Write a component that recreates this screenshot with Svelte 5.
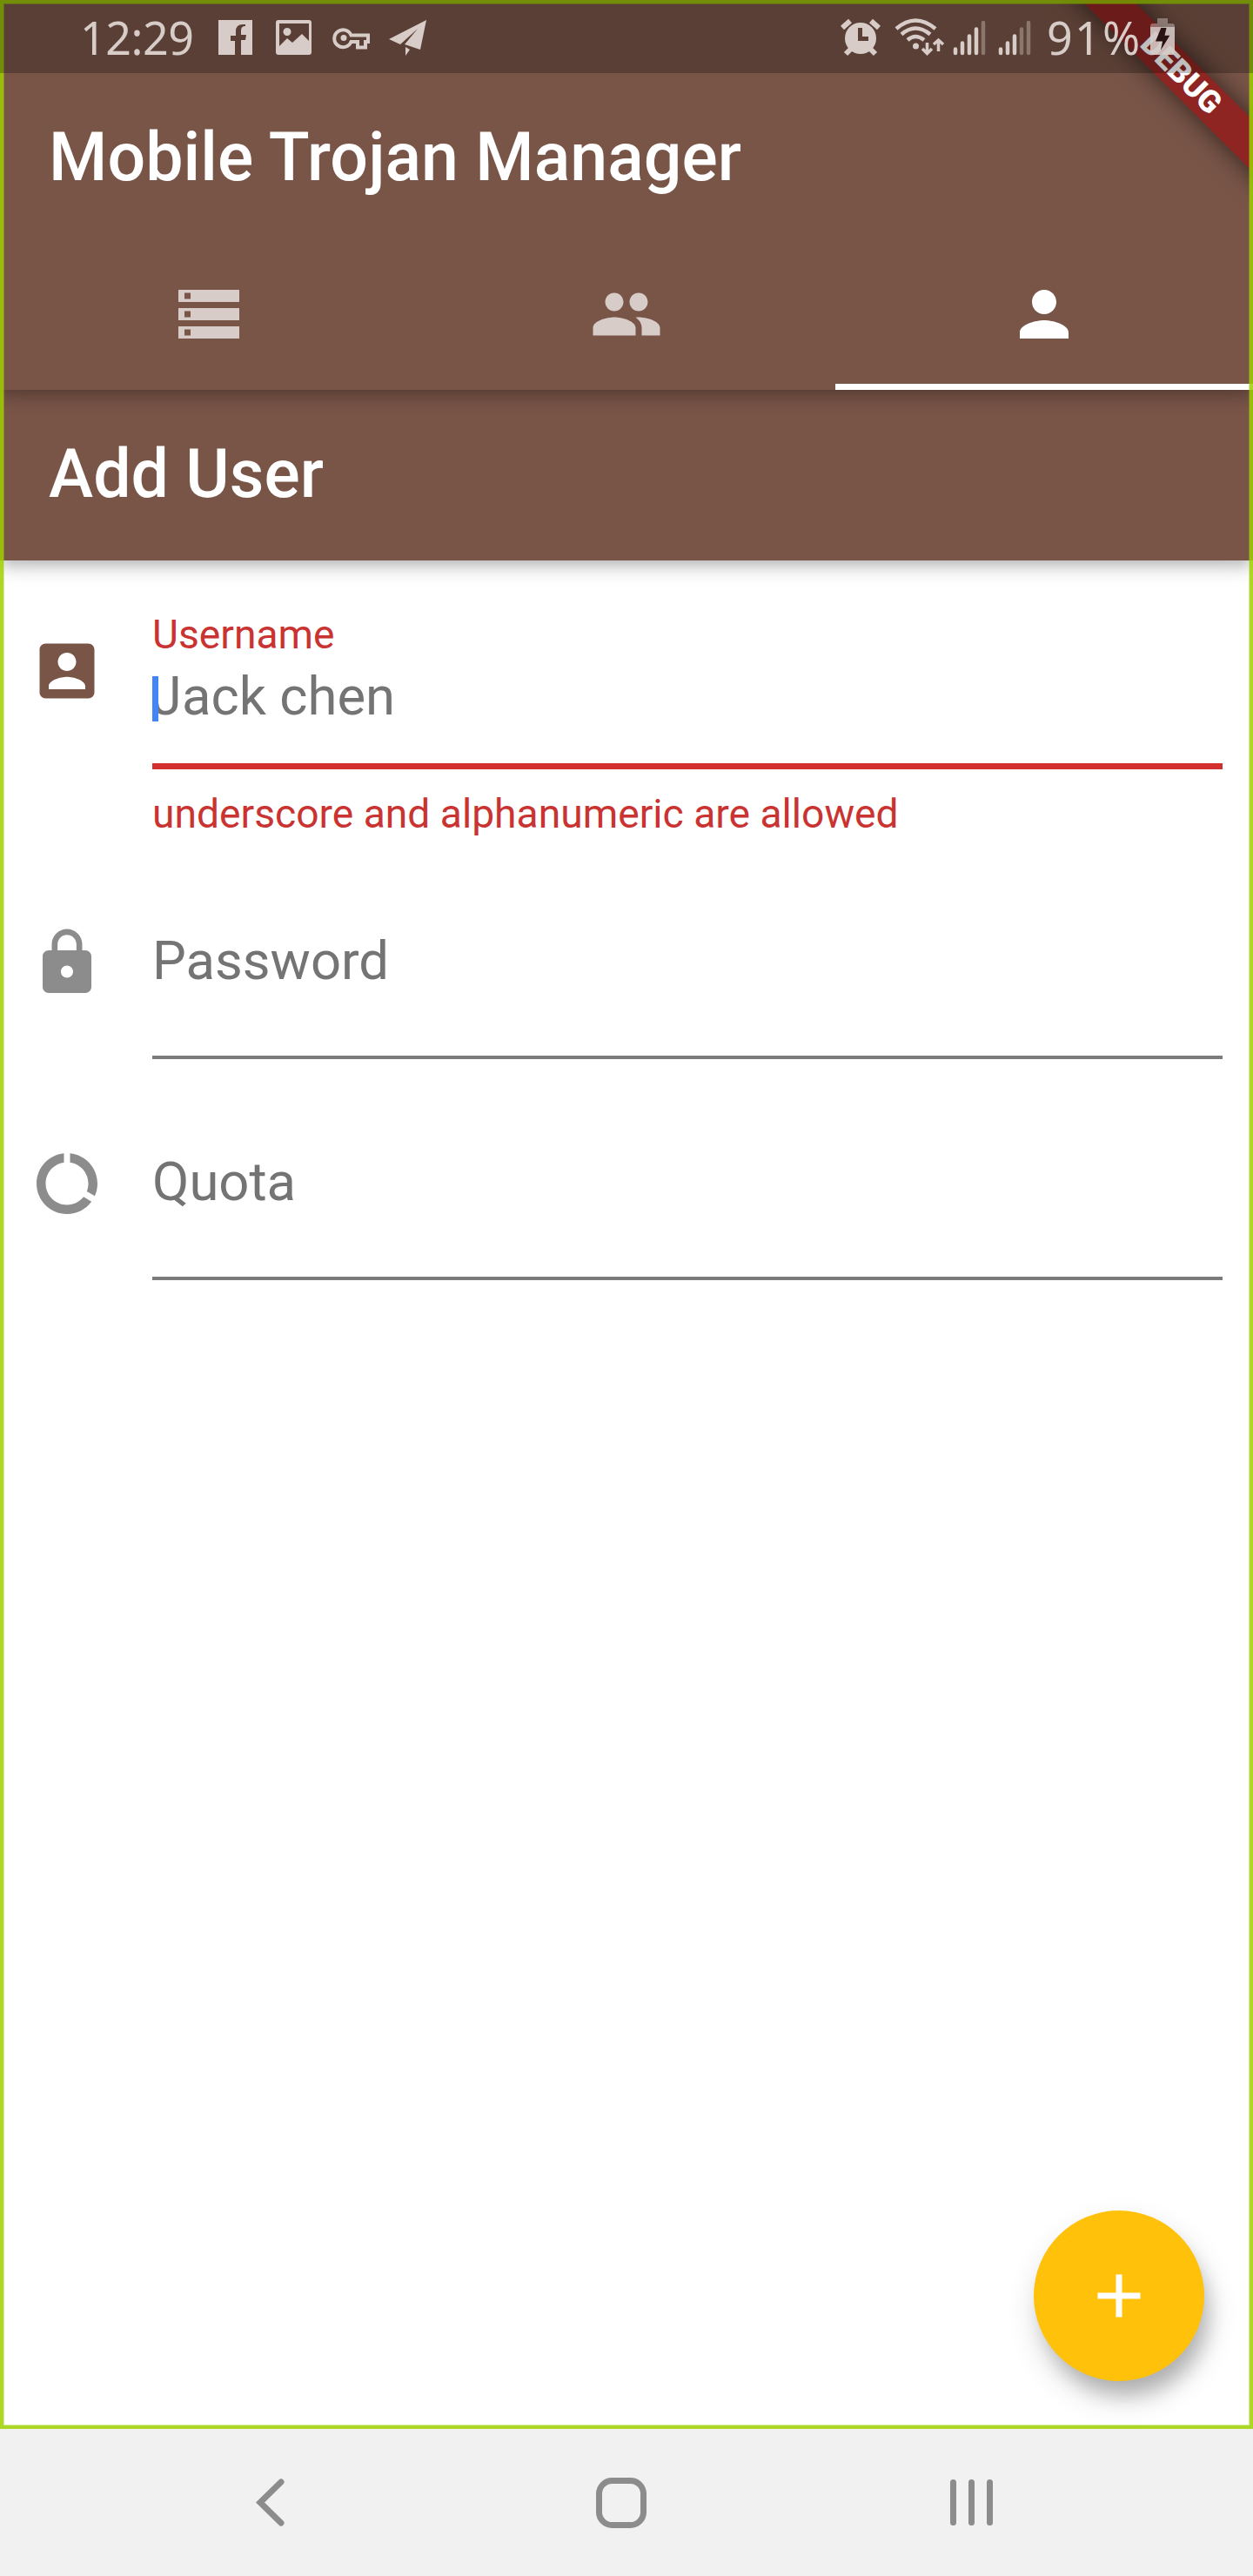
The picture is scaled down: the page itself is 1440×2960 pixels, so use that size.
<script>
  const tabs = [
    { id: 'servers', active: false, d: 'M2 20h20v-4H2v4zm2-3h2v2H4v-2zM2 4v4h20V4H2zm4 3H4V5h2v2zm-4 7h20v-4H2v4zm2-3h2v2H4v-2z' },
    { id: 'users', active: false, d: 'M16 11c1.66 0 2.99-1.34 2.99-3S17.66 5 16 5c-1.66 0-3 1.34-3 3s1.34 3 3 3zm-8 0c1.66 0 2.99-1.34 2.99-3S9.66 5 8 5C6.34 5 5 6.34 5 8s1.34 3 3 3zm0 2c-2.33 0-7 1.17-7 3.5V19h14v-2.5c0-2.33-4.67-3.5-7-3.5zm8 0c-.29 0-.62.02-.97.05 1.16.84 1.97 1.97 1.97 3.45V19h6v-2.5c0-2.33-4.67-3.5-7-3.5z' },
    { id: 'user', active: true, d: 'M12 12c2.21 0 4-1.79 4-4s-1.79-4-4-4-4 1.79-4 4 1.79 4 4 4zm0 2c-2.67 0-8 1.34-8 4v2h16v-2c0-2.66-5.33-4-8-4z' }
  ];
  const accountBox = 'M3 5v14c0 1.1.89 2 2 2h14c1.1 0 2-.9 2-2V5c0-1.1-.9-2-2-2H5c-1.11 0-2 .9-2 2zm12 4c0 1.66-1.34 3-3 3s-3-1.34-3-3 1.34-3 3-3 3 1.34 3 3zm-9 8c0-2 4-3.1 6-3.1s6 1.1 6 3.1v1H6v-1z';
  const lock = 'M18 8h-1V6c0-2.76-2.24-5-5-5S7 3.24 7 6v2H6c-1.1 0-2 .9-2 2v10c0 1.1.9 2 2 2h12c1.1 0 2-.9 2-2V10c0-1.1-.9-2-2-2zm-6 9c-1.1 0-2-.9-2-2s.9-2 2-2 2 .9 2 2-.9 2-2 2zm3.1-9H8.9V6c0-1.71 1.39-3.1 3.1-3.1 1.71 0 3.1 1.39 3.1 3.1v2z';
  const dataUsage = 'M13 2.05v3.03c3.39.49 6 3.39 6 6.92 0 .9-.18 1.75-.48 2.54l2.6 1.53c.56-1.24.88-2.62.88-4.07 0-5.18-3.95-9.45-9-9.95zM12 19c-3.87 0-7-3.13-7-7 0-3.53 2.61-6.43 6-6.92V2.05c-5.06.5-9 4.76-9 9.95 0 5.52 4.47 10 9.99 10 3.31 0 6.24-1.61 8.06-4.09l-2.6-1.53C16.17 17.98 14.21 19 12 19z';
</script>

<div class="phone">
  <div class="app">
    <header class="appbar main">
      <h1>Mobile Trojan Manager</h1>
      <nav class="tabs">
        {#each tabs as tab (tab.id)}
          <div class="tab" class:active={tab.active}>
            <svg class="icon" viewBox="0 0 24 24"><path d={tab.d} /></svg>
          </div>
        {/each}
      </nav>
    </header>
    <header class="appbar sub"><h1>Add User</h1></header>

    <main>
      <div class="row username">
        <svg class="icon" viewBox="0 0 24 24"><path d={accountBox} /></svg>
        <div class="field">
          <div class="label">Username</div>
          <div class="value">Jack chen<i class="caret"></i></div>
          <div class="error">underscore and alphanumeric are allowed</div>
        </div>
      </div>
      <div class="row">
        <svg class="icon" viewBox="0 0 24 24"><path d={lock} /></svg>
        <div class="field plain">Password</div>
      </div>
      <div class="row">
        <svg class="icon" viewBox="0 0 24 24"><path d={dataUsage} /></svg>
        <div class="field plain">Quota</div>
      </div>
    </main>

    <div class="fab">
      <svg class="icon" viewBox="0 0 24 24"><path d="M19 13h-6v6h-2v-6H5v-2h6V5h2v6h6v2z" /></svg>
    </div>
    <div class="banner-clip"><div class="banner">DEBUG</div></div>
    <div class="frame"></div>

    <div class="status">
      <span class="clock">12:29</span>
      <svg class="notices" viewBox="240 0 260 84">
        <path d="M251 23h39v40h-13V46h5l1-6h-6v-5q0-5 5-5V28h-3q-8 0-8 8v5h-6v6h5v16h-19z" />
        <path fill-rule="evenodd" d="M320 23h35q3 0 3 3v34q0 3-3 3h-35q-3 0-3-3V26q0-3 3-3zm1 4v26l9-9 6 5 11-10 8 8V27zm9 5a4.500 4.500 0 1 1-.01 0z" />
        <path class="line" d="M403.500 40.500H423V48H420V54.500H411V48H403.500A10 10 0 1 1 403.500 40.500Z" />
        <circle cx="395" cy="43.500" r="3.500" />
        <path d="M447 45 490 23 483 57 465 51 480 33 460 51zM466 54 471 57 466 64z" />
      </svg>
      <svg class="signals" viewBox="960 0 230 84">
        <circle cx="989" cy="44" r="18" />
        <path class="stroke" d="M968 32 977 24M1001 24 1010 32M980 54 972 62M998 54 1006 62" />
        <path class="ink" d="M986 32h5v10h7v5h-12z" />
        <path class="arc" d="M1030 33Q1052 14 1075 33M1036 39.500Q1052 25.500 1069 39.500M1043 46Q1052 38 1062 46" />
        <circle cx="1052.500" cy="53" r="3.500" />
        <path class="arrow" d="M1065.500 49V60M1060 56 1065.500 61.500 1071 56M1078.500 59V47M1073 51 1078.500 46 1084 51" />
        <path class="bar" d="M1098 56.500V61M1106 49.500V61M1114 41.500V61M1122 33.500V61M1150 56.500V61M1158 49.500V61M1166 41.500V61" />
        <path class="bar dim" d="M1130 26V61M1174 33.500V61M1182 26V61" />
      </svg>
      <span class="percent">91%</span>
      <svg class="battery" viewBox="1320 0 32 84">
        <path class="faint" d="M1330 21h12v6h5q3 0 3 3v1h-28v-1q0-3 3-3h5z" />
        <path class="cell" d="M1322 31h28v29q0 3-3 3h-22q-3 0-3-3z" />
        <path class="bolt" d="M1334.300 32h6.200l-2 8.700h5.800l-10.300 17 2-10.300h-8z" />
      </svg>
    </div>
  </div>

  <footer class="softkeys">
    <svg viewBox="0 0 1440 168">
      <path class="key" d="M323 60 299 83.500 323 107" />
      <rect class="key" x="688.500" y="58.500" width="51" height="51" rx="15" />
      <path class="key" d="M1095.500 60.500V106.500M1116.500 60.500V106.500M1137.500 60.500V106.500" />
    </svg>
  </footer>
</div>

<style>
  :global(body) { margin: 0; }
  .phone {
    width: 1440px;
    height: 2960px;
    display: flex;
    flex-direction: column;
    font-family: Roboto, sans-serif;
    background: #f1f1f1;
    overflow: hidden;
  }
  .app {
    position: relative;
    height: 2791px;
    flex: none;
    overflow: hidden;
    background: #fff;
    display: flex;
    flex-direction: column;
    margin-bottom: 1px;
  }
  .appbar {
    position: relative;
    background: #795548;
    color: #fff;
    flex: none;
    box-shadow: 0 7px 14px -3px rgba(0, 0, 0, .2), 0 14px 18px rgba(0, 0, 0, .08), 0 3px 30px rgba(0, 0, 0, .05);
  }
  .main { padding-top: 84px; z-index: 2; }
  .sub { z-index: 1; }
  h1 {
    margin: 0;
    height: 196px;
    line-height: 194px;
    padding-left: 56px;
    font-size: 77px;
    font-weight: 500;
    letter-spacing: .08px;
    white-space: nowrap;
  }
  .tabs { display: flex; height: 168px; }
  .tab {
    flex: 1;
    box-sizing: border-box;
    display: flex;
    align-items: center;
    justify-content: center;
    color: #d7ccc8;
    border-bottom: 7px solid transparent;
  }
  .tab.active { color: #fff; border-color: #fff; }
  .icon { width: 84px; height: 84px; fill: currentColor; flex: none; display: block; }
  main { padding: 47px 35px 0; }
  .row { display: flex; align-items: center; gap: 56px; color: #8c8c8c; height: 254px; }
  .row > .icon { margin-top: 31px; }
  .row.username { color: #795548; align-items: flex-start; height: 272px; }
  .row.username > .icon { margin-top: 38px; }
  .field { flex: 1; color: #747474; font-size: 61.600px; white-space: nowrap; }
  .label, .error { color: #c93331; font-size: 46.200px; line-height: 54px; }
  .label { padding-top: 11px; }
  .value {
    position: relative;
    height: 116px;
    line-height: 78px;
    padding-top: 5px;
    border-bottom: 7px solid #d32f2f;
  }
  .caret { position: absolute; left: 0; top: 21px; width: 7px; height: 52px; background: #4285f4; }
  .error { padding-top: 24px; }
  .plain { height: 254px; box-sizing: border-box; border-bottom: 4px solid #7b7b7b; line-height: 282px; }
  .fab {
    position: absolute;
    right: 56px;
    bottom: 55px;
    width: 196px;
    height: 196px;
    border-radius: 50%;
    background: #ffc10a;
    color: #fff;
    display: flex;
    align-items: center;
    justify-content: center;
    box-shadow: 8px 20px 22px -4px rgba(0, 0, 0, .2), 4px 18px 36px rgba(0, 0, 0, .16);
  }
  .banner-clip { position: absolute; right: 0; top: 0; width: 300px; height: 300px; overflow: hidden; z-index: 3; }
  .banner {
    position: absolute;
    width: 400px;
    height: 42px;
    left: 17px;
    top: 63.500px;
    transform: rotate(45deg);
    background: #8f2522;
    box-shadow: 0 0 30px rgba(0, 0, 0, .6);
    color: #fff;
    font-size: 35.700px;
    font-weight: 900;
    line-height: 40px;
    text-align: center;
  }
  .frame {
    position: absolute;
    inset: 0;
    border: 4px solid rgba(159, 208, 0, .85);
    box-shadow: inset 0 0 0 1px rgba(159, 208, 0, .4);
    z-index: 4;
  }
  .status {
    position: absolute;
    inset: 0 0 auto;
    height: 84px;
    z-index: 5;
    background: rgba(0, 0, 0, .25);
    display: flex;
    align-items: center;
    color: #d7ccc8;
    fill: #d7ccc8;
    font-family: "Noto Sans", sans-serif;
    font-size: 52px;
    line-height: 84px;
  }
  .status span { padding-top: 2px; }
  .status svg { height: 84px; flex: none; }
  .clock { width: 148px; padding-left: 92px; letter-spacing: -.5px; }
  .notices { width: 260px; }
  .signals { width: 230px; margin-left: 460px; }
  .percent { width: 117px; padding-left: 13px; letter-spacing: 2.200px; }
  .battery { width: 32px; }
  .line { fill: none; stroke: #d7ccc8; stroke-width: 4; }
  .stroke { fill: none; stroke: #d7ccc8; stroke-width: 6; }
  .arc { fill: none; stroke: #d7ccc8; stroke-width: 4.500; }
  .arrow { fill: none; stroke: #d7ccc8; stroke-width: 3.500; }
  .bar { fill: none; stroke: #d7ccc8; stroke-width: 4.500; stroke-linecap: round; }
  .dim { stroke: #8b766e; }
  .ink { fill: #5a4036; }
  .faint { opacity: .45; }
  .cell { opacity: .88; }
  .bolt { fill: #2a1413; }
  .softkeys { height: 168px; }
  .softkeys svg { width: 1440px; height: 168px; display: block; }
  .key { fill: none; stroke: #8c8c8c; stroke-width: 7; stroke-linecap: round; }
</style>
